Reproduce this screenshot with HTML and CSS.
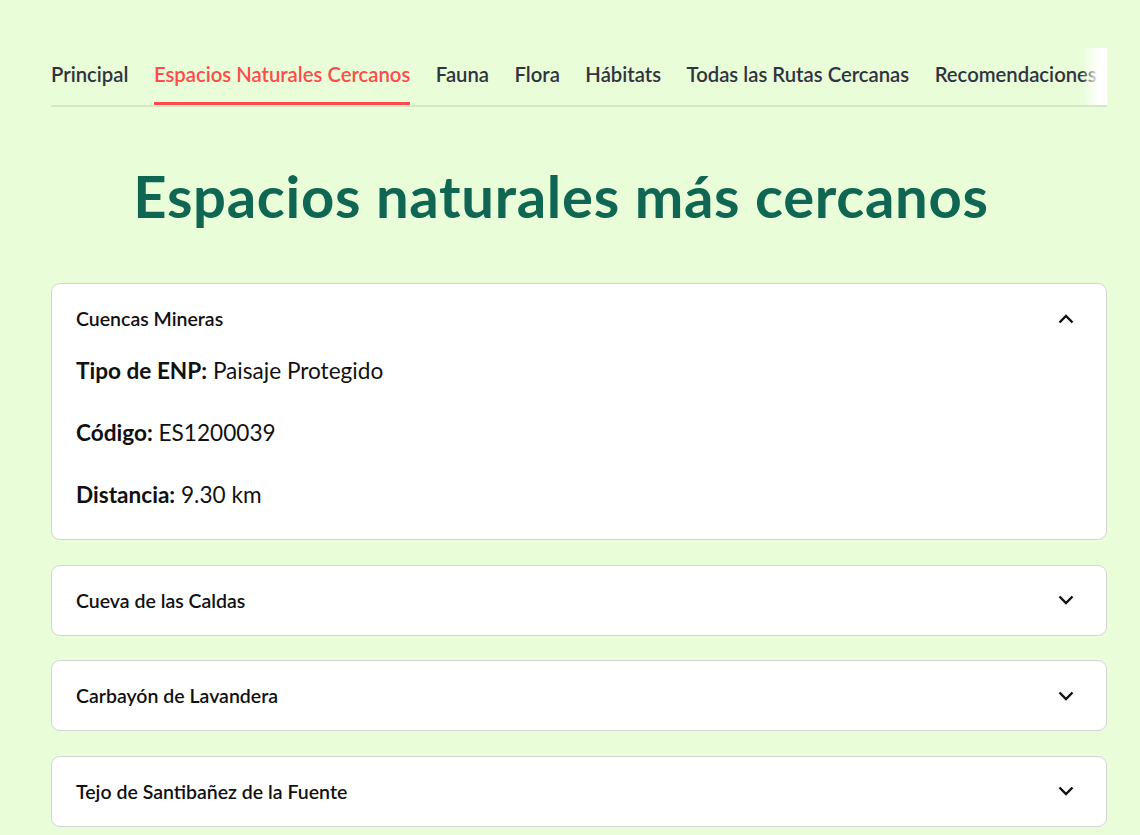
FILE: index.html
```html
<!DOCTYPE html>
<html lang="es">
<head>
<meta charset="utf-8">
<title>Espacios naturales más cercanos</title>
<link rel="stylesheet" href="styles.css">
</head>
<body>
<main class="main">
  <nav class="tabs">
    <div class="tab-list">
      <span class="tab">Principal</span>
      <span class="tab active">Espacios Naturales Cercanos</span>
      <span class="tab">Fauna</span>
      <span class="tab">Flora</span>
      <span class="tab">Hábitats</span>
      <span class="tab">Todas las Rutas Cercanas</span>
      <span class="tab">Recomendaciones Personalizadas</span>
    </div>
    <div class="tab-fade"></div>
  </nav>

  <h1 class="title">Espacios naturales más cercanos</h1>

  <section class="expanders">
    <div class="expander open">
      <div class="summary">
        <span class="summary-label">Cuencas Mineras</span>
        <svg class="chev" width="16" height="10" viewBox="0 0 16 10"><polyline points="1.5,8.5 8,2 14.5,8.5" fill="none" stroke="#111" stroke-width="2.4"/></svg>
      </div>
      <div class="details">
        <p><strong>Tipo de ENP:</strong> Paisaje Protegido</p>
        <p><strong>Código:</strong> ES1200039</p>
        <p><strong>Distancia:</strong> 9.30 km</p>
      </div>
    </div>
    <div class="expander">
      <div class="summary">
        <span class="summary-label">Cueva de las Caldas</span>
        <svg class="chev" width="16" height="10" viewBox="0 0 16 10"><polyline points="1.5,1.5 8,8 14.5,1.5" fill="none" stroke="#111" stroke-width="2.4"/></svg>
      </div>
    </div>
    <div class="expander">
      <div class="summary">
        <span class="summary-label">Carbayón de Lavandera</span>
        <svg class="chev" width="16" height="10" viewBox="0 0 16 10"><polyline points="1.5,1.5 8,8 14.5,1.5" fill="none" stroke="#111" stroke-width="2.4"/></svg>
      </div>
    </div>
    <div class="expander">
      <div class="summary">
        <span class="summary-label">Tejo de Santibañez de la Fuente</span>
        <svg class="chev" width="16" height="10" viewBox="0 0 16 10"><polyline points="1.5,1.5 8,8 14.5,1.5" fill="none" stroke="#111" stroke-width="2.4"/></svg>
      </div>
    </div>
  </section>
</main>
</body>
</html>
```
FILE: styles.css
```css
html, body {
  margin: 0;
  padding: 0;
  background: #e8fdd8;
  overflow: hidden;
}
body {
  font-family: Lato, "Noto Sans", sans-serif;
  color: #31333f;
}
.main {
  width: 1056px;
  padding: 48px 0 0 51px;
}
.tabs {
  position: relative;
  border-bottom: 2px solid #d6e6c9;
  height: 57px;
  overflow: hidden;
}
.tab-list {
  display: flex;
  gap: 25.5px;
  white-space: nowrap;
}
.tab {
  font-size: 20.3px;
  font-weight: 600;
  line-height: 32px;
  padding: 10px 0 12px;
  color: #31333f;
  border-bottom: 3px solid transparent;
}
.tab.active {
  color: #ff4b4b;
  border-bottom-color: #ff4b4b;
}
.tab-fade {
  position: absolute;
  right: 0;
  top: 0;
  width: 26px;
  height: 60px;
  background: linear-gradient(to right, rgba(255,255,255,0), #ffffff 70%);
}
.title {
  margin: 53.5px 0 52.5px;
  padding-right: 36px;
  text-align: center;
  font-size: 58px;
  letter-spacing: 0.7px;
  font-weight: 700;
  line-height: 70px;
  color: #0f6652;
}
.expanders {
  display: flex;
  flex-direction: column;
  gap: 24.5px;
}
.expander {
  background: #ffffff;
  border: 1px solid #d3d6d9;
  border-radius: 9px;
}
.summary {
  height: 69px;
  display: flex;
  align-items: center;
  justify-content: space-between;
  padding: 0 32px 0 24px;
}
.summary-label {
  font-size: 19.5px;
  font-weight: 600;
  color: #111;
}
.chev {
  display: block;
}
.details {
  padding: 0 24px;
}
.details p {
  margin: 0 0 27px;
  font-size: 22.6px;
  line-height: 35px;
  color: #111;
}
.details strong {
  font-weight: 700;
}
```
